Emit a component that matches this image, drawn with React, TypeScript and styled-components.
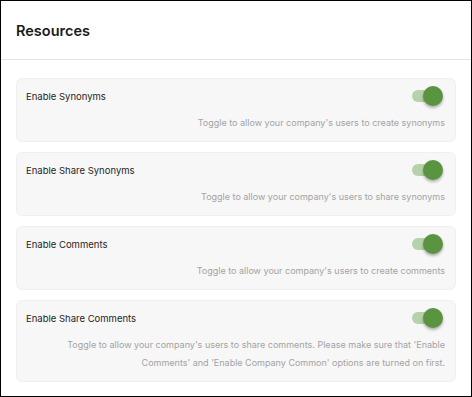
import { useState } from "react";
import styled, { createGlobalStyle } from "styled-components";

const GlobalStyle = createGlobalStyle`
  html, body { margin: 0; padding: 0; background: #fff; }
  body { font-family: Inter, "Noto Sans", sans-serif; }
`;

const settings = [
  { id: "synonyms", title: "Enable Synonyms", desc: "Toggle to allow your company's users to create synonyms" },
  { id: "shareSynonyms", title: "Enable Share Synonyms", desc: "Toggle to allow your company's users to share synonyms" },
  { id: "comments", title: "Enable Comments", desc: "Toggle to allow your company's users to create comments" },
  {
    id: "shareComments",
    title: "Enable Share Comments",
    desc: "Toggle to allow your company's users to share comments. Please make sure that 'Enable Comments' and 'Enable Company Common' options are turned on first.",
  },
];

const App = () => {
  const [on, setOn] = useState<Record<string, boolean>>({ synonyms: true, shareSynonyms: true, comments: true, shareComments: true });

  return (
    <>
      <GlobalStyle />
      <Panel>
        <Header>
          <Title>Resources</Title>
        </Header>
        <List>
          {settings.map((s) => (
            <Card key={s.id}>
              <Row>
                <Label>{s.title}</Label>
                <Switch type="button" $on={on[s.id]} onClick={() => setOn((p) => ({ ...p, [s.id]: !p[s.id] }))}>
                  <Track $on={on[s.id]} />
                  <Knob $on={on[s.id]} />
                </Switch>
              </Row>
              <Desc>{s.desc}</Desc>
            </Card>
          ))}
        </List>
      </Panel>
    </>
  );
};

const Panel = styled.div`
  width: 472px;
  height: 397px;
  box-sizing: border-box;
  border: 1px solid #000;
  display: flex;
  flex-direction: column;
  overflow: hidden;
`;

const Header = styled.div`
  height: 59px;
  box-sizing: border-box;
  border-bottom: 1px solid #e3e3e3;
  padding: 0 15px;
  display: flex;
  align-items: center;
`;

const Title = styled.h1`
  margin: 0;
  font-size: 14.5px;
  font-weight: 600;
  color: #1a1a1a;
`;

const List = styled.div`
  padding: 18px 15px 0;
  display: flex;
  flex-direction: column;
  gap: 10px;
`;

const Card = styled.div`
  background: #f7f7f7;
  border: 1px solid #efefef;
  border-radius: 6px;
  padding: 7px 10px 9px 9px;
  display: flex;
  flex-direction: column;
  gap: 8px;
`;

const Row = styled.div`
  display: flex;
  align-items: center;
  justify-content: space-between;
  height: 20px;
`;

const Label = styled.span`
  font-size: 9.5px;
  color: #1f1f1f;
`;

const Switch = styled.button<{ $on: boolean }>`
  position: relative;
  width: 32px;
  height: 20px;
  margin-right: 2px;
  padding: 0;
  border: 0;
  background: none;
  cursor: pointer;
`;

const Track = styled.span<{ $on: boolean }>`
  position: absolute;
  left: 1px;
  top: 4px;
  width: 26px;
  height: 12px;
  border-radius: 6px;
  background: ${(p) => (p.$on ? "#b6d2aa" : "#d5d5d5")};
`;

const Knob = styled.span<{ $on: boolean }>`
  position: absolute;
  top: 0;
  left: ${(p) => (p.$on ? "12px" : "0")};
  width: 20px;
  height: 20px;
  border-radius: 50%;
  background: ${(p) => (p.$on ? "#5a9440" : "#fafafa")};
  box-shadow: 0 2px 3px rgba(0, 0, 0, 0.3);
`;

const Desc = styled.p`
  margin: 0;
  font-size: 9px;
  line-height: 18px;
  color: #a3a3a3;
  text-align: right;
`;

export default App;
